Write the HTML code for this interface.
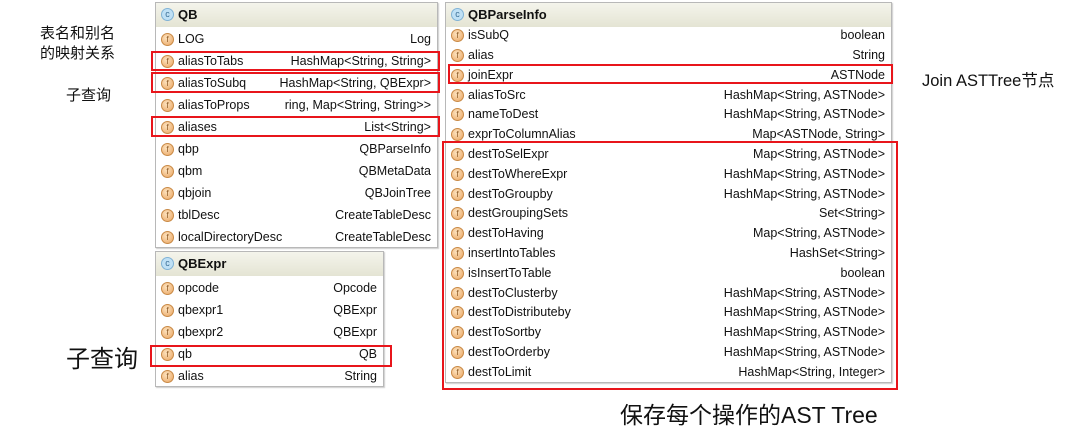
<!DOCTYPE html>
<html><head><meta charset="utf-8"><style>
*{margin:0;padding:0;box-sizing:border-box}
body{width:1083px;height:439px;background:#fff;position:relative;overflow:hidden;font-family:"Liberation Sans","Noto Sans CJK SC",sans-serif;color:#111}
.p{position:absolute;background:#fff;border:1px solid #b8b8b8;box-shadow:1px 1px 1px #ccc}
.h{position:absolute;left:0;right:0;top:0;height:24px;background:linear-gradient(#f4f4ec,#e4e4d4);font-weight:bold;font-size:13px;line-height:24px;padding-left:22px}
.h i{position:absolute;left:5px;top:5px;width:13px;height:13px;border-radius:50%;background:#bfe0f5;border:1px solid #7fb2d6;font-style:normal;font-weight:normal;font-size:9px;line-height:11px;text-align:center;color:#3a6e95}
.r{position:absolute;left:0;right:0;height:20px;font-size:12.5px;line-height:20px;padding-left:22px;padding-right:6px}
.r b{position:absolute;left:5px;top:4px;width:13px;height:13px;border-radius:50%;background:radial-gradient(circle at 40% 35%,#fde3bf,#e9a460);border:1px solid #c98a46;font-weight:normal;font-size:8px;line-height:11px;text-align:center;color:#8a5520}
.r span{float:right}
.red{position:absolute;border:2px solid #e8151b}
.t{position:absolute;white-space:nowrap}
</style></head><body>

<div class="t" style="left:40px;top:24px;font-size:15px;line-height:20px">表名和别名<br>的映射关系</div>
<div class="t" style="left:66px;top:84px;font-size:15px">子查询</div>
<div class="t" style="left:66px;top:339px;font-size:24px">子查询</div>
<div class="t" style="left:922px;top:67px;font-size:16.5px">Join ASTTree节点</div>
<div class="t" style="left:620px;top:396px;font-size:23px">保存每个操作的AST Tree</div>

<div class="p" style="left:155px;top:2px;width:283px;height:246px">
<div class="h"><i>c</i>QB</div>
<div class="r" style="top:26px"><b>f</b>LOG<span>Log</span></div>
<div class="r" style="top:48px"><b>f</b>aliasToTabs<span>HashMap&lt;String, String&gt;</span></div>
<div class="r" style="top:70px"><b>f</b>aliasToSubq<span>HashMap&lt;String, QBExpr&gt;</span></div>
<div class="r" style="top:92px"><b>f</b>aliasToProps<span>ring, Map&lt;String, String&gt;&gt;</span></div>
<div class="r" style="top:114px"><b>f</b>aliases<span>List&lt;String&gt;</span></div>
<div class="r" style="top:136px"><b>f</b>qbp<span>QBParseInfo</span></div>
<div class="r" style="top:158px"><b>f</b>qbm<span>QBMetaData</span></div>
<div class="r" style="top:180px"><b>f</b>qbjoin<span>QBJoinTree</span></div>
<div class="r" style="top:202px"><b>f</b>tblDesc<span>CreateTableDesc</span></div>
<div class="r" style="top:224px"><b>f</b>localDirectoryDesc<span>CreateTableDesc</span></div>
</div>

<div class="p" style="left:155px;top:251px;width:229px;height:136px">
<div class="h"><i>c</i>QBExpr</div>
<div class="r" style="top:26px"><b>f</b>opcode<span>Opcode</span></div>
<div class="r" style="top:48px"><b>f</b>qbexpr1<span>QBExpr</span></div>
<div class="r" style="top:70px"><b>f</b>qbexpr2<span>QBExpr</span></div>
<div class="r" style="top:92px"><b>f</b>qb<span>QB</span></div>
<div class="r" style="top:114px"><b>f</b>alias<span>String</span></div>
</div>

<div class="p" style="left:445px;top:2px;width:447px;height:381px">
<div class="h"><i>c</i>QBParseInfo</div>
<div class="r" style="top:22px"><b>f</b>isSubQ<span>boolean</span></div>
<div class="r" style="top:42px"><b>f</b>alias<span>String</span></div>
<div class="r" style="top:62px"><b>f</b>joinExpr<span>ASTNode</span></div>
<div class="r" style="top:82px"><b>f</b>aliasToSrc<span>HashMap&lt;String, ASTNode&gt;</span></div>
<div class="r" style="top:101px"><b>f</b>nameToDest<span>HashMap&lt;String, ASTNode&gt;</span></div>
<div class="r" style="top:121px"><b>f</b>exprToColumnAlias<span>Map&lt;ASTNode, String&gt;</span></div>
<div class="r" style="top:141px"><b>f</b>destToSelExpr<span>Map&lt;String, ASTNode&gt;</span></div>
<div class="r" style="top:161px"><b>f</b>destToWhereExpr<span>HashMap&lt;String, ASTNode&gt;</span></div>
<div class="r" style="top:181px"><b>f</b>destToGroupby<span>HashMap&lt;String, ASTNode&gt;</span></div>
<div class="r" style="top:200px"><b>f</b>destGroupingSets<span>Set&lt;String&gt;</span></div>
<div class="r" style="top:220px"><b>f</b>destToHaving<span>Map&lt;String, ASTNode&gt;</span></div>
<div class="r" style="top:240px"><b>f</b>insertIntoTables<span>HashSet&lt;String&gt;</span></div>
<div class="r" style="top:260px"><b>f</b>isInsertToTable<span>boolean</span></div>
<div class="r" style="top:280px"><b>f</b>destToClusterby<span>HashMap&lt;String, ASTNode&gt;</span></div>
<div class="r" style="top:299px"><b>f</b>destToDistributeby<span>HashMap&lt;String, ASTNode&gt;</span></div>
<div class="r" style="top:319px"><b>f</b>destToSortby<span>HashMap&lt;String, ASTNode&gt;</span></div>
<div class="r" style="top:339px"><b>f</b>destToOrderby<span>HashMap&lt;String, ASTNode&gt;</span></div>
<div class="r" style="top:359px"><b>f</b>destToLimit<span>HashMap&lt;String, Integer&gt;</span></div>
</div>

<div class="red" style="left:151px;top:51px;width:289px;height:20px"></div>
<div class="red" style="left:151px;top:72px;width:289px;height:21px"></div>
<div class="red" style="left:151px;top:116px;width:289px;height:21px"></div>
<div class="red" style="left:150px;top:345px;width:242px;height:22px"></div>
<div class="red" style="left:448px;top:64px;width:445px;height:20px"></div>
<div class="red" style="left:442px;top:141px;width:456px;height:249px"></div>
</body></html>
